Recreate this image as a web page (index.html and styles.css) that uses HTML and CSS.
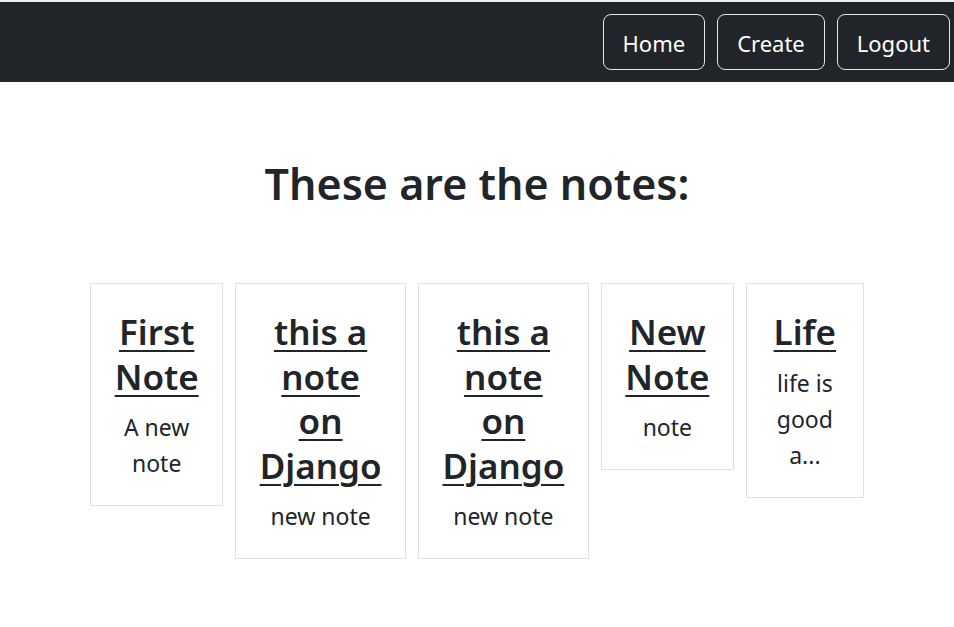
FILE: index.html
```html
<!DOCTYPE html>
<html lang="en">
<head>
<meta charset="utf-8">
<title>Notes</title>
<link rel="stylesheet" href="styles.css">
</head>
<body>
<nav class="navbar">
  <a class="nav-btn" href="#">Home</a>
  <a class="nav-btn" href="#">Create</a>
  <a class="nav-btn" href="#">Logout</a>
</nav>
<main class="content">
  <h1 class="page-title">These are the notes:</h1>
  <div class="notes">
    <div class="note-card">
      <h2 class="note-title"><a href="#">First Note</a></h2>
      <p class="note-body">A new note</p>
    </div>
    <div class="note-card">
      <h2 class="note-title"><a href="#">this a note on Django</a></h2>
      <p class="note-body">new note</p>
    </div>
    <div class="note-card">
      <h2 class="note-title"><a href="#">this a note on Django</a></h2>
      <p class="note-body">new note</p>
    </div>
    <div class="note-card">
      <h2 class="note-title"><a href="#">New Note</a></h2>
      <p class="note-body">note</p>
    </div>
    <div class="note-card">
      <h2 class="note-title"><a href="#">Life</a></h2>
      <p class="note-body">life is good a...</p>
    </div>
  </div>
</main>
</body>
</html>
```
FILE: styles.css
```css
html, body {
  margin: 0;
  padding: 0;
}
body {
  border-top: 2px solid #ececec;
  font-family: "Noto Sans", "Open Sans", sans-serif;
  color: #212529;
  background: #fff;
}
.navbar {
  background: #212529;
  height: 80px;
  display: flex;
  justify-content: flex-end;
  align-items: center;
  gap: 12px;
  padding: 0 4px 0 0;
  box-sizing: border-box;
}
.nav-btn {
  display: flex;
  align-items: center;
  justify-content: center;
  height: 56px;
  box-sizing: border-box;
  padding: 2px 19px 0;
  border: 1px solid #e6e6e6;
  border-radius: 8px;
  color: #fff;
  text-decoration: none;
  font-size: 22px;
}
.content {
  text-align: center;
}
.page-title {
  margin: 75px 0 0;
  font-size: 43px;
  font-weight: 600;
  line-height: 54px;
}
.notes {
  display: flex;
  justify-content: center;
  align-items: flex-start;
  gap: 12px;
  margin-top: 72px;
}
.note-card {
  width: min-content;
  min-width: 118px;
  box-sizing: border-box;
  border: 1px solid #dee2e6;
  padding: 26px 23.5px 24px;
}
.note-title {
  margin: 0 0 10px;
  font-size: 35px;
  font-weight: 600;
  line-height: 44.5px;
}
.note-title a {
  color: #212529;
  text-decoration: underline;
  text-decoration-thickness: 2px;
  text-underline-offset: 5px;
}
.note-body {
  margin: 0;
  font-size: 23px;
  line-height: 36px;
}
```
